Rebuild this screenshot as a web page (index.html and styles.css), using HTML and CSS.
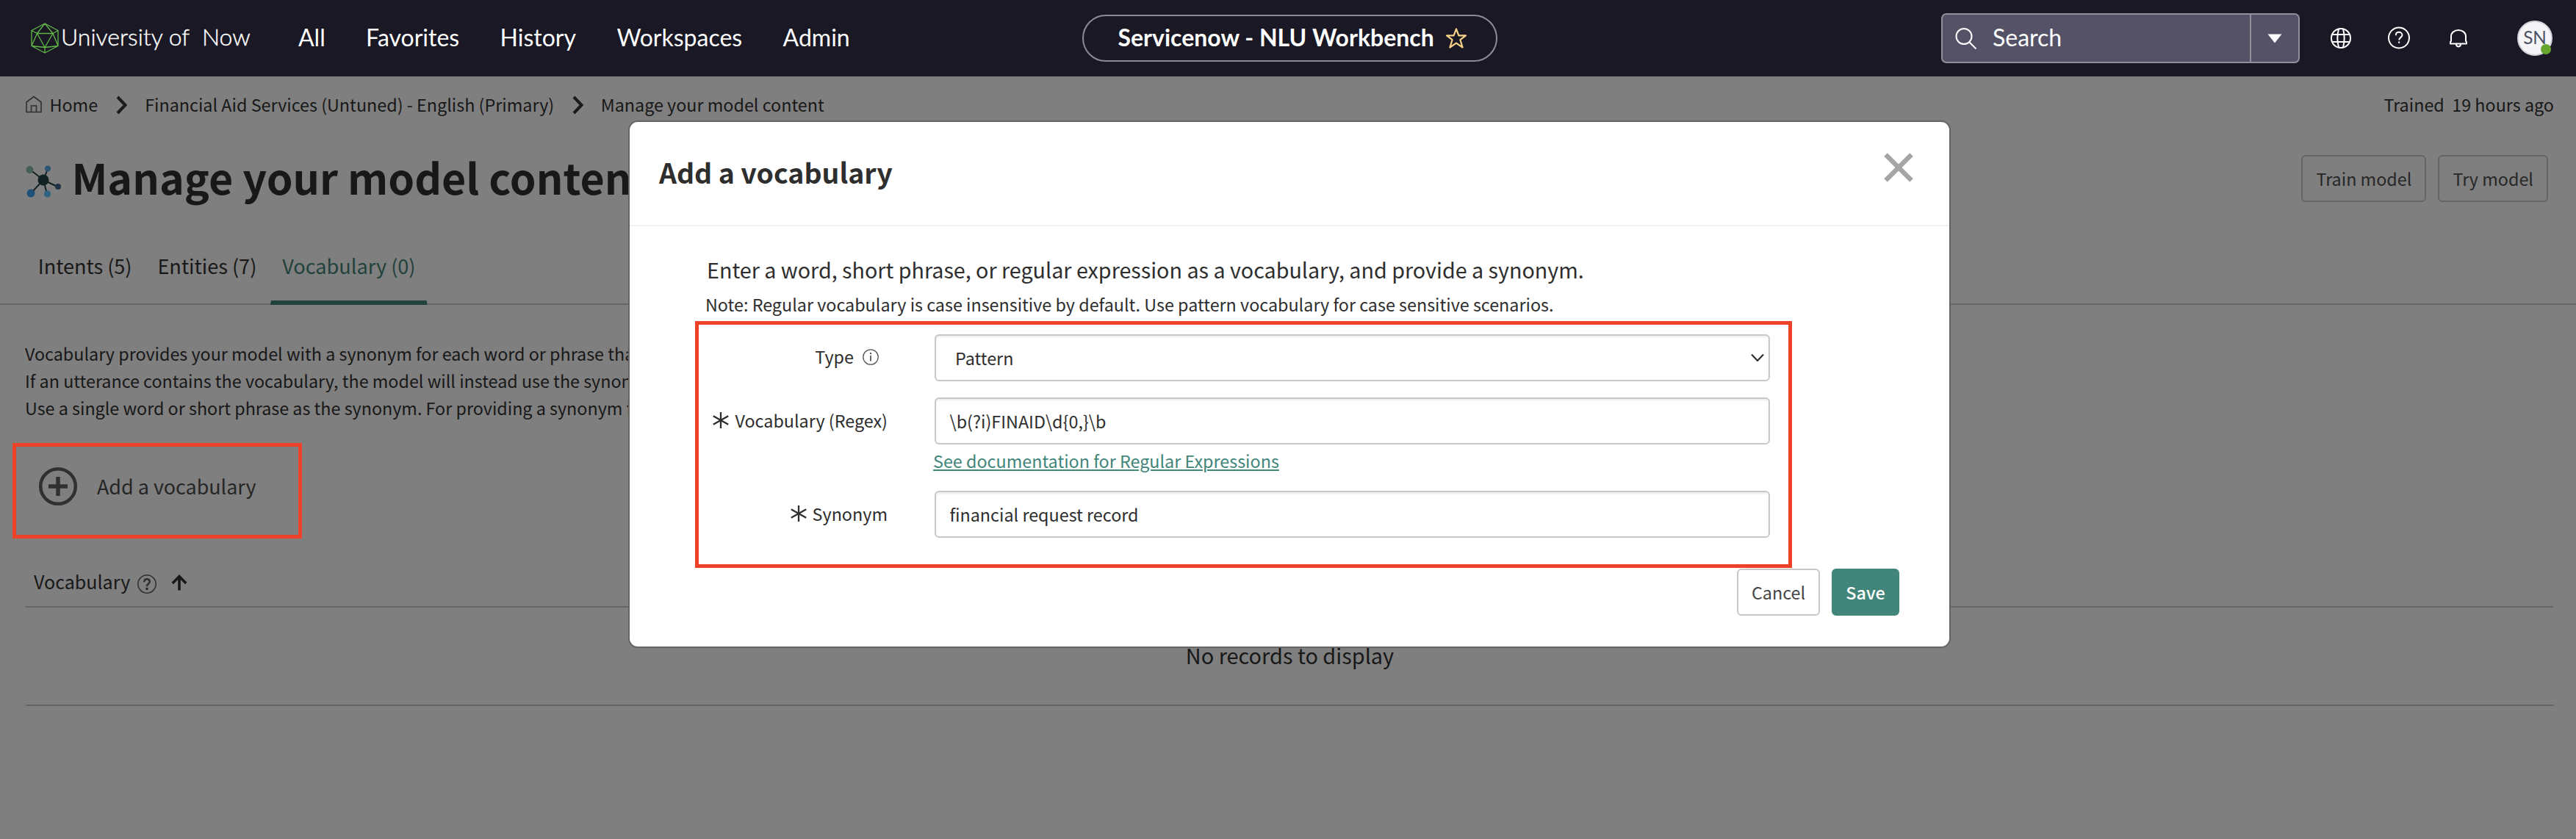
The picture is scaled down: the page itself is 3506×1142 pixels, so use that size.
FILE: index.html
```html
<!DOCTYPE html>
<html lang="en">
<head>
<meta charset="utf-8">
<title>Servicenow - NLU Workbench</title>
<link rel="stylesheet" href="styles.css">
</head>
<body>
<header class="topbar">
  <div class="topbar-left">
    <div class="brand">
      <svg class="brand-icon" width="38" height="42" viewBox="0 0 38 42" fill="none" stroke="#62b846" stroke-width="1.3" stroke-linejoin="round"><path d="M19 1 37 10.5V31.500L19 41 1 31.500V10.500ZM8.500 14.500H30L19 33.500ZM19 1 8.500 14.500 1 10.500M19 1 30 14.500 37 10.500M8.500 14.500 1 31.500 19 33.500 37 31.500 30 14.500M19 33.500V41"/></svg>
      <span class="brand-name">University of&nbsp; Now</span>
    </div>
    <nav class="nav"><a>All</a><a>Favorites</a><a>History</a><a>Workspaces</a><a>Admin</a></nav>
  </div>
  <div class="context-pill">
    <span>Servicenow - NLU Workbench</span>
    <svg width="30" height="30" viewBox="0 0 30 30" fill="none" stroke="#f7d087" stroke-width="2.2" stroke-linejoin="round"><path d="M15 2.500 18.400 11.300H28L20.400 17.200 23.600 27.500 15 21.700 6.400 27.500 9.600 17.200 2 11.300H11.600Z"/></svg>
  </div>
  <div class="topbar-right">
    <div class="search">
      <div class="search-field">
        <svg width="30" height="30" viewBox="0 0 30 30" fill="none" stroke="#fff" stroke-width="2"><circle cx="12" cy="12.500" r="10.500"/><path d="M19 20 28.500 29.500"/></svg>
        <span>Search</span>
      </div>
      <div class="search-scope"><svg width="20" height="13" viewBox="0 0 20 13"><path d="M0.500 0.500H19.500L10 12.500Z" fill="#fff"/></svg></div>
    </div>
    <svg class="ic ic-globe" width="32" height="32" viewBox="0 0 32 32" fill="none" stroke="#fff" stroke-width="2"><circle cx="16" cy="16" r="13"/><path d="M3.500 11H28.500M3.500 21H28.500M13 3.500C11 11 11 21 13 28.500M19 3.500C21 11 21 21 19 28.500"/></svg>
    <svg class="ic ic-help" width="32" height="32" viewBox="0 0 32 32" fill="none" stroke="#fff" stroke-width="2"><circle cx="16" cy="15.500" r="14"/><path d="M11.800 12.200C11.800 9.500 13.500 7.800 16 7.800S20.500 9.500 20.500 11.800C20.500 15 16.200 14.800 16.200 18.500"/><path d="M16.200 20.500V22.800"/></svg>
    <svg class="ic ic-bell" width="32" height="32" viewBox="0 0 32 32" fill="none" stroke="#fff" stroke-width="2" stroke-linejoin="round"><path d="M6 20V13.500C6 8.500 10.500 5 16 5S26 8.500 26 13.500V20C26 20 27 20.500 27 22V23.500H5V22C5 20.500 6 20 6 20Z"/><path d="M13 24C13 28.500 19 28.500 19 24"/></svg>
    <div class="avatar">SN<i class="presence"></i></div>
  </div>
</header>

<main class="page">
  <div class="crumbs">
    <svg class="home" width="22" height="24" viewBox="0 0 22 24" fill="none" stroke="#303030" stroke-width="1.600"><path d="M1 22.500V9L11 1.500 21 9V22.500ZM7.500 22.500V14H14.500V22.500"/></svg>
    <span>Home</span>
    <svg class="chev chev-a" width="16" height="26" viewBox="0 0 16 26" fill="none" stroke="#1b1b1b" stroke-width="4"><path d="M2 2 12.500 13 2 24"/></svg>
    <span>Financial Aid Services (Untuned) - English (Primary)</span>
    <svg class="chev chev-b" width="16" height="26" viewBox="0 0 16 26" fill="none" stroke="#1b1b1b" stroke-width="4"><path d="M2 2 12.500 13 2 24"/></svg>
    <span>Manage your model content</span>
    <span class="trained">Trained&nbsp; 19 hours ago</span>
  </div>

  <div class="title-row">
    <svg class="model-icon" width="48" height="44" viewBox="0 0 48 44"><path d="M24 20 6 6M24 20 30 5M24 20 43 29M24 20 7 38M24 20 29 39" stroke="#122222" stroke-width="2" fill="none"/><circle cx="24" cy="20" r="7.500" fill="#122222"/><circle cx="5.500" cy="6" r="5" fill="#455e52"/><circle cx="30" cy="4.500" r="4" fill="#2b5670"/><circle cx="44" cy="29" r="4" fill="#213345"/><circle cx="7" cy="38" r="5.500" fill="#1f5078"/><circle cx="29.500" cy="39" r="4.700" fill="#2f6481"/></svg>
    <h1>Manage your model content</h1>
    <div class="title-actions"><button>Train model</button><button>Try model</button></div>
  </div>

  <div class="tabs"><a>Intents (5)</a><a>Entities (7)</a><a class="active">Vocabulary (0)</a></div>

  <div class="intro">
    <p>Vocabulary provides your model with a synonym for each word or phrase that</p>
    <p>If an utterance contains the vocabulary, the model will instead use the synonym</p>
    <p>Use a single word or short phrase as the synonym. For providing a synonym for</p>
  </div>

  <div class="add-row">
    <svg width="54" height="54" viewBox="0 0 54 54" fill="none" stroke="#303030"><circle cx="27" cy="27" r="23.800" stroke-width="4.500"/><path d="M27 14V40M14 27H40" stroke-width="5.500"/></svg>
    <span>Add a vocabulary</span>
  </div>

  <div class="table-head">
    <span>Vocabulary</span>
    <svg class="th-help" width="28" height="28" viewBox="0 0 28 28" fill="none" stroke="#303030"><circle cx="14" cy="14" r="12.200" stroke-width="1.500"/><path d="M10.300 11.200C10.300 8.800 11.800 7.300 14 7.300S17.700 8.700 17.700 10.800C17.700 13.700 14 13.300 14 17" stroke-width="2.600"/><circle cx="14" cy="20.300" r="1.900" fill="#303030" stroke="none"/></svg>
    <svg class="th-sort" width="22" height="22" viewBox="0 0 22 22" fill="none" stroke="#181818" stroke-width="3.600"><path d="M11 21.500V3M1.800 12 11 2.600 20.200 12"/></svg>
  </div>
  <div class="table-empty">No records to display</div>
</main>

<section class="modal">
  <div class="modal-head">
    <h2>Add a vocabulary</h2>
    <svg width="40" height="40" viewBox="0 0 40 40" fill="none" stroke="#a5a5a5" stroke-width="6.500"><path d="M2.500 2.500 37.500 37.500M37.500 2.500 2.500 37.500"/></svg>
  </div>
  <div class="modal-body">
    <p class="lead">Enter a word, short phrase, or regular expression as a vocabulary, and provide a synonym.</p>
    <p class="note">Note: Regular vocabulary is case insensitive by default. Use pattern vocabulary for case sensitive scenarios.</p>
    <div class="row row-type">
      <label>Type <svg class="info" width="22" height="22" viewBox="0 0 22 22" fill="none" stroke="#555" stroke-width="1.300"><circle cx="11" cy="11" r="10.200"/><path d="M11 9V16.500" stroke-width="1.800"/><circle cx="11" cy="6" r="1.200" fill="#555" stroke="none"/></svg></label>
      <div class="field select"><span>Pattern</span><svg width="20" height="14" viewBox="0 0 20 14" fill="none" stroke="#2e2e2e" stroke-width="2.200"><path d="M2 2.500 10 11 18 2.500"/></svg></div>
    </div>
    <div class="row row-regex">
      <label><svg width="22" height="22" viewBox="0 0 22 22" stroke="#2e2e2e" stroke-width="2.300"><path d="M11 0V22M.8 5.300 21.200 16.700M21.200 5.300 .8 16.700"/></svg>Vocabulary (Regex)</label>
      <div class="field">\b(?i)FINAID\d{0,}\b</div>
    </div>
    <a class="doc-link">See documentation for Regular Expressions</a>
    <div class="row row-synonym">
      <label><svg width="22" height="22" viewBox="0 0 22 22" stroke="#2e2e2e" stroke-width="2.300"><path d="M11 0V22M.8 5.300 21.200 16.700M21.200 5.300 .8 16.700"/></svg>Synonym</label>
      <div class="field">financial request record</div>
    </div>
    <div class="modal-actions"><button class="cancel">Cancel</button><button class="save">Save</button></div>
  </div>
</section>

<div class="callout callout-add"></div>
<div class="callout callout-form"></div>
</body>
</html>
```
FILE: styles.css
```css
* { box-sizing: border-box; }
body {
  margin: 0;
  position: relative;
  height: 1142px;
  overflow: hidden;
  background: #7f7f7f;
  color: #181818;
  font-family: "Noto Sans CJK SC", "Noto Sans", sans-serif;
  font-size: 23.33px;
}
h1, h2, p { margin: 0; white-space: nowrap; }
svg { display: block; flex: none; }
button { font: inherit; background: none; white-space: nowrap; padding: 0; text-align: center; }

/* top bar */
.topbar {
  height: 104px;
  display: flex;
  align-items: center;
  background: #191824;
  color: #fff;
  font-family: Lato, sans-serif;
  font-size: 32px;
  line-height: 40px;
  white-space: nowrap;
}
.topbar-left { width: 1472.500px; display: flex; align-items: center; padding-left: 42px; }
.brand { width: 364px; display: flex; align-items: center; }
.brand-icon { width: 38px; }
.brand-name { padding: 0 0 5px 3px; font-weight: 300; -webkit-text-stroke: .4px #fff; }
.nav { display: flex; gap: 55.400px; padding-bottom: 3px; }
.context-pill {
  width: 565px;
  height: 64px;
  display: flex;
  align-items: center;
  justify-content: space-between;
  padding: 0 39px 0 47px;
  border: 2px solid #8c8b98;
  border-radius: 32px;
  font-weight: 700;
}
.context-pill span { padding-bottom: 3px; }
.topbar-right { flex: 1; display: flex; align-items: center; justify-content: flex-end; padding-right: 32px; }
.search {
  width: 488px;
  height: 68px;
  display: flex;
  background: #555268;
  border: 2px solid #908f9a;
  border-radius: 7px;
}
.search-field { flex: 1; display: flex; align-items: center; gap: 21px; padding-left: 17px; }
.search-field span { padding-bottom: 3px; }
.search-scope { width: 66px; display: flex; align-items: center; justify-content: center; border-left: 2px solid #908f9a; }
.ic-globe { margin-left: 40px; }
.ic-help { margin-left: 47px; }
.ic-bell { margin-left: 49px; }
.avatar {
  position: relative;
  width: 48px;
  height: 48px;
  margin-left: 64px;
  border: 2px solid #d4d3dc;
  border-radius: 50%;
  background: #f5f5f8;
  color: #4c5263;
  font-size: 24.300px;
  line-height: 42px;
  text-align: center;
}
.presence { position: absolute; right: 0; bottom: 0; width: 14px; height: 14px; border-radius: 50%; background: #67a52f; }

/* page behind the dialog */
.page { padding-top: 18px; }
.crumbs { display: flex; align-items: center; height: 40px; line-height: 40px; padding: 0 30px 0 35px; white-space: nowrap; }
.home { margin-right: 10.500px; }
.chev-a { margin: 2px 23px 0 25px; }
.chev-b { margin: 2px 23px 0 24.500px; }
.trained { margin-left: auto; }
.title-row { display: flex; align-items: center; height: 80px; margin-top: 39px; padding: 0 38px 0 35px; }
.model-icon { margin: 12px 14.500px 0 0; }
h1 { font-size: 57.300px; line-height: 82px; font-weight: 700; }
.title-actions { display: flex; gap: 16px; margin: 4px 0 0 auto; }
.title-actions button {
  height: 64px;
  border: 2px solid #656565;
  border-radius: 6px;
  color: #272727;
  line-height: 60px;
  padding: 0 18px;
}
.tabs {
  display: flex;
  gap: 2.500px;
  height: 84px;
  margin-top: 50px;
  padding-left: 35.500px;
  border-bottom: 2px solid #656565;
  font-size: 27.100px;
  line-height: 62px;
  white-space: nowrap;
}
.tabs a { height: 84px; padding: 0 16.200px; }
.tabs .active { color: #21423c; display: flex; flex-direction: column; justify-content: space-between; }
.tabs .active::after {
  content: "";
  height: 6px;
  margin: 0 -16.200px;
  background: #21423c;
  clip-path: polygon(1px 0, calc(100% - 1px) 0, 100% 100%, 0 100%);
}
.intro { margin: 48px 0 0 34px; line-height: 37px; font-size: 23.300px; }
.add-row { display: flex; align-items: center; height: 60px; margin-top: 58px; padding-left: 52px; gap: 26px; font-size: 26.900px; line-height: 40px; color: #262626; }
.add-row span { padding-bottom: 1px; }
.table-head {
  display: flex;
  align-items: center;
  height: 63px;
  margin: 72px 31px 0 34px;
  padding: 0 0 7px 12px;
  border-bottom: 2px solid #656565;
  font-size: 25.070px;
  line-height: 54px;
}
.th-help { margin: 8px 0 0 9px; }
.th-sort { margin: 3px 0 0 19px; }
.table-empty {
  height: 134px;
  margin: 0 30px 0 35px;
  border-bottom: 2px solid #656565;
  font-size: 28.900px;
  line-height: 129px;
  text-align: center;
}

/* dialog */
.modal {
  position: absolute;
  left: 857px;
  top: 166px;
  width: 1796px;
  height: 714px;
  background: #fff;
  border-radius: 11px;
  box-shadow: 0 0 0 2px #656565;
  color: #2e2e2e;
}
.modal-head {
  display: flex;
  justify-content: space-between;
  height: 142px;
  padding: 0 49px 0 40px;
  border-bottom: 2px solid #f1f1f1;
}
h2 { font-size: 37.450px; line-height: 136px; font-weight: 700; }
.modal-head svg { margin-top: 42px; }
.modal-body { padding: 39px 68px 0 103px; }
.lead { font-size: 28.700px; line-height: 40px; padding-left: 2px; }
.note { line-height: 36px; margin-top: 9px; }
.row { display: flex; align-items: center; gap: 64px; }
.row label { width: 248px; display: flex; align-items: center; justify-content: flex-end; line-height: 34px; white-space: nowrap; gap: 8px; padding-bottom: 2px; }
.row-type { margin-top: 23px; }
.row-type label { padding: 0 12px 5px 0; gap: 12px; }
.row-regex { margin-top: 22px; }
.row-synonym { margin-top: 25px; }
.info { margin-top: 3px; }
.field {
  width: 1136.500px;
  height: 64px;
  border: 2px solid #c8c8c8;
  border-radius: 6px;
  box-shadow: inset 0 2px 3px rgba(0, 0, 0, .08);
  padding-left: 18.500px;
  line-height: 60px;
}
.select { display: flex; align-items: center; justify-content: space-between; padding: 0 5px 0 26px; }
.doc-link {
  display: block;
  width: max-content;
  margin: 6px 0 0 310px;
  line-height: 32px;
  color: #42857a;
  text-decoration: underline;
  text-decoration-thickness: 2px;
  text-underline-offset: 2px;
}
.modal-actions { display: flex; justify-content: flex-end; gap: 16px; margin-top: 42px; }
.modal-actions button { height: 64px; border-radius: 6px; line-height: 60px; }
.cancel { width: 113px; border: 2px solid #c8c8c8; color: #454545; }
.save { width: 92px; border: 2px solid #42857a; background: #42857a; color: #fff; font-weight: 500; }

/* annotation frames */
.callout { position: absolute; border: 5px solid #ee4226; }
.callout-add { left: 17px; top: 603px; width: 394px; height: 130px; }
.callout-form { left: 946px; top: 437px; width: 1493px; height: 336px; }
```
